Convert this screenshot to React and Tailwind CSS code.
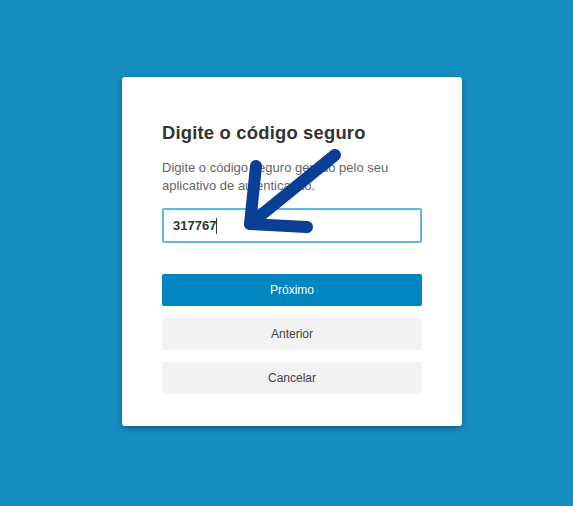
import React from 'react';

const Arrow = () => (
  <svg className="absolute left-0 top-0 pointer-events-none" width="573" height="506" viewBox="0 0 573 506">
    <g stroke="#0a3f96" strokeWidth="12" strokeLinecap="round" strokeLinejoin="round" fill="none">
      <line x1="335" y1="155" x2="250" y2="224" />
      <polyline points="256,166 250,224 307,227" />
    </g>
  </svg>
);

export default function App() {
  return (
    <div className="relative w-[573px] h-[506px] bg-[#168dc1] flex pl-[122px] pt-[77px] font-['Liberation_Sans',Arial,sans-serif]">
      <div className="w-[340px] h-[349px] bg-white rounded-[3px] shadow-[0_2px_6px_rgba(0,0,0,0.35)] px-10 pt-[44px]">
        <h1 className="text-[18.4px] font-bold text-[#333] leading-6 tracking-[0.2px]">Digite o código seguro</h1>
        <p className="mt-[14px] text-[13px] leading-[18px] text-[#666]">
          Digite o código seguro gerado pelo seu aplicativo de autenticação.
        </p>
        <div className="mt-[13px] h-[35px] border-2 border-[#63b6df] rounded-[2px] flex items-center px-[9px]">
          <span className="text-[13px] font-bold text-[#333]">317767</span>
          <span className="w-px h-[16px] bg-[#333]" />
        </div>
        <div className="mt-[31px] flex flex-col gap-3">
          <button className="h-8 rounded-[2px] bg-[#0185c1] text-white text-[12px]">Próximo</button>
          <button className="h-8 rounded-[2px] bg-[#f2f2f2] text-[#444] text-[12px]">Anterior</button>
          <button className="h-8 rounded-[2px] bg-[#f2f2f2] text-[#444] text-[12px]">Cancelar</button>
        </div>
      </div>
      <Arrow />
    </div>
  );
}
